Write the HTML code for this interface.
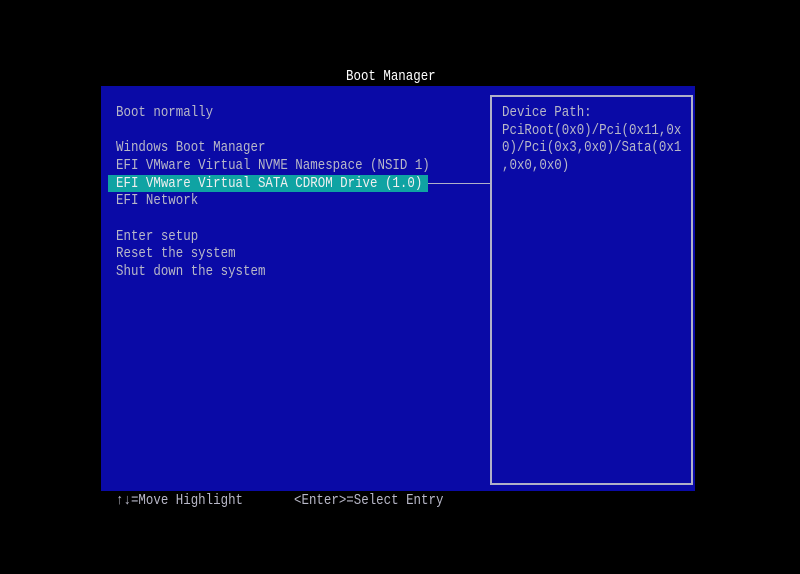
<!DOCTYPE html>
<html><head><style>
html,body{margin:0;padding:0;background:#000;width:800px;height:574px;overflow:hidden}
body{position:relative;font-family:"Liberation Mono","DejaVu Sans Mono",monospace;font-size:14.5px;color:#b8b8c8}
.t{position:absolute;white-space:pre;line-height:18px;transform:scaleX(0.8586);transform-origin:0 0}
#panel{position:absolute;left:101px;top:86px;width:594px;height:405px;background:#0a0aa6}
#box{position:absolute;left:490px;top:95px;width:199px;height:386px;border:2px solid #b0b0c8}
#hl{position:absolute;left:108px;top:175px;width:320px;height:17px;background:#0fa3a3}
#line{position:absolute;left:428px;top:183px;width:62px;height:1px;background:#b0b0c8}
</style></head><body>
<div class="t" style="left:346px;top:68px;color:#fff">Boot Manager</div>
<div id="panel"></div>
<div id="box"></div>
<div id="hl"></div>
<div id="line"></div>
<div class="t" style="left:116px;top:104px">Boot normally</div>
<div class="t" style="left:116px;top:139px">Windows Boot Manager</div>
<div class="t" style="left:116px;top:157px">EFI VMware Virtual NVME Namespace (NSID 1)</div>
<div class="t" style="left:116px;top:175px;color:#f0f0f0">EFI VMware Virtual SATA CDROM Drive (1.0)</div>
<div class="t" style="left:116px;top:192px">EFI Network</div>
<div class="t" style="left:116px;top:228px">Enter setup</div>
<div class="t" style="left:116px;top:245px">Reset the system</div>
<div class="t" style="left:116px;top:263px">Shut down the system</div>
<div class="t" style="left:502px;top:104px">Device Path:</div>
<div class="t" style="left:502px;top:122px">PciRoot(0x0)/Pci(0x11,0x</div>
<div class="t" style="left:502px;top:139px">0)/Pci(0x3,0x0)/Sata(0x1</div>
<div class="t" style="left:502px;top:157px">,0x0,0x0)</div>
<div class="t" style="left:116px;top:492px">↑↓=Move Highlight</div>
<div class="t" style="left:294px;top:492px">&lt;Enter&gt;=Select Entry</div>
</body></html>
